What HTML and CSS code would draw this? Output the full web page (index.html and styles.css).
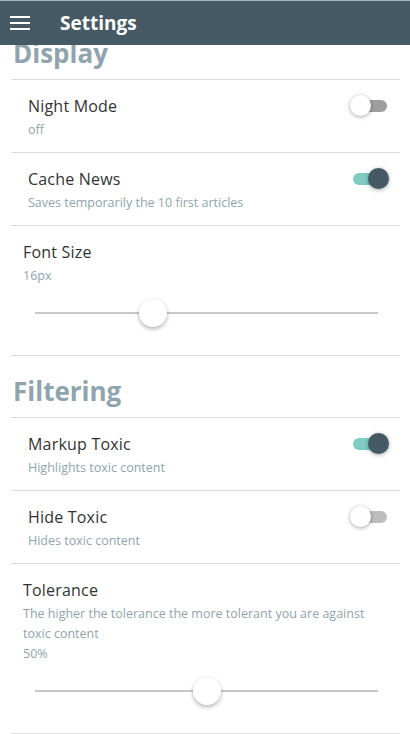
FILE: index.html
```html
<!DOCTYPE html>
<html>
<head>
<meta charset="utf-8">
<link rel="stylesheet" href="styles.css">
</head>
<body>
<header class="topbar">
  <div class="burger"><span></span><span></span><span></span></div>
  <div class="topbar-title">Settings</div>
</header>
<main class="content">
  <h2 class="section-title">Display</h2>
  <div class="row">
    <div class="row-head">
      <div class="row-title">Night Mode</div>
      <div class="toggle off"><div class="track"></div><div class="thumb"></div></div>
    </div>
    <div class="row-sub">off</div>
  </div>
  <div class="row">
    <div class="row-head">
      <div class="row-title">Cache News</div>
      <div class="toggle on"><div class="track"></div><div class="thumb"></div></div>
    </div>
    <div class="row-sub">Saves temporarily the 10 first articles</div>
  </div>
  <div class="row row-slider">
    <div class="row-title">Font Size</div>
    <div class="row-sub">16px</div>
    <div class="slider"><div class="slider-track"><div class="slider-thumb" style="left:34.4%"></div></div></div>
  </div>
  <h2 class="section-title">Filtering</h2>
  <div class="row">
    <div class="row-head">
      <div class="row-title">Markup Toxic</div>
      <div class="toggle on"><div class="track"></div><div class="thumb"></div></div>
    </div>
    <div class="row-sub">Highlights toxic content</div>
  </div>
  <div class="row">
    <div class="row-head">
      <div class="row-title">Hide Toxic</div>
      <div class="toggle off light"><div class="track"></div><div class="thumb"></div></div>
    </div>
    <div class="row-sub">Hides toxic content</div>
  </div>
  <div class="row row-slider">
    <div class="row-title">Tolerance</div>
    <div class="row-sub">The higher the tolerance the more tolerant you are against toxic content</div>
    <div class="row-sub">50%</div>
    <div class="slider"><div class="slider-track"><div class="slider-thumb" style="left:50%"></div></div></div>
  </div>
</main>
</body>
</html>
```

FILE: styles.css
```css
* { box-sizing: border-box; }
html, body { margin: 0; padding: 0; background: #fff; }
body {
  font-family: "Open Sans", "Noto Sans", sans-serif;
  color: #3a3a3a;
  height: 734px;
  overflow: hidden;
}
.topbar {
  position: fixed;
  top: 0; left: 0; right: 0;
  height: 45px;
  background: #455a64;
  border-top: 1px solid #a9b3b8;
  display: flex;
  align-items: center;
  z-index: 10;
}
.burger {
  width: 20px;
  margin-left: 10px;
  display: flex;
  flex-direction: column;
  gap: 4px;
}
.burger span {
  display: block;
  height: 2px;
  background: #fff;
}
.topbar-title {
  margin-left: 30px;
  color: #fff;
  font-weight: 700;
  font-size: 19px;
  line-height: 24px;
}
.content {
  padding: 18px 10px 0 11px;
}
.section-title {
  margin: 0;
  padding: 17px 0 8px 2px;
  font-size: 26px;
  line-height: 36px;
  font-weight: 700;
  color: #90a4ae;
  border-bottom: 1px solid #dcdcdc;
}
.row {
  padding: 12px 13px 12px 17px;
  border-bottom: 1px solid #dcdcdc;
}
.row-head {
  display: flex;
  align-items: center;
  justify-content: space-between;
}
.row-title {
  font-size: 16px;
  line-height: 28px;
  color: #333;
  letter-spacing: 0.2px;
}
.row-sub {
  font-size: 12.5px;
  line-height: 20px;
  color: #90a4ae;
}
.row-slider {
  padding: 12px 0 15px 12px;
}
.row-slider .row-sub {
  padding-right: 32px;
}
.toggle {
  position: relative;
  width: 36px;
  height: 20px;
}
.toggle .track {
  position: absolute;
  left: 2px; right: 0;
  top: 4px;
  height: 12px;
  border-radius: 6px;
  background: #9e9e9e;
}
.toggle.light .track { background: #bdbdbd; }
.toggle.on .track { background: #80cbc4; right: 8px; }
.toggle .thumb {
  position: absolute;
  top: -1px;
  width: 21px;
  height: 21px;
  border-radius: 50%;
  background: #fff;
  box-shadow: 0 1px 4px rgba(0,0,0,0.35);
  left: -1px;
}
.toggle.on .thumb {
  background: #455a64;
  left: 17px;
}
.slider {
  height: 54px;
  display: flex;
  align-items: center;
  padding: 0 22px 0 12px;
}
.slider-track {
  position: relative;
  flex: 1;
  height: 2px;
  background: #c8c8c8;
}
.slider-thumb {
  position: absolute;
  top: 50%;
  width: 28px;
  height: 28px;
  border-radius: 50%;
  background: #fff;
  box-shadow: 0 2px 4px rgba(0,0,0,0.3);
  transform: translate(-50%, -50%);
}
```
